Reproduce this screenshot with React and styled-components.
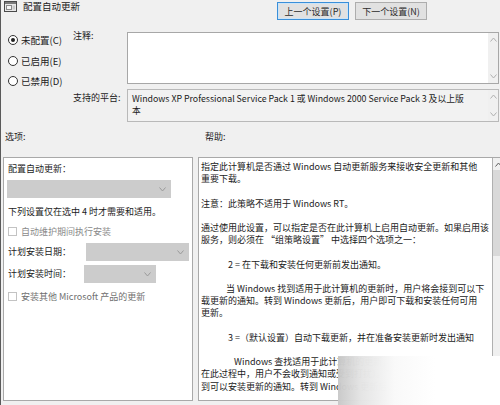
import styled, { createGlobalStyle, css } from 'styled-components'

const GlobalStyle = createGlobalStyle`
  html, body {
    margin: 0;
    padding: 0;
    background: #f0f0f0;
  }
  body {
    font-family: "Noto Sans CJK SC", "Noto Sans", sans-serif;
    font-size: 9px;
    color: #1b1b1b;
  }
`

const Window = styled.div`
  position: relative;
  width: 500px;
  height: 405px;
  box-sizing: border-box;
  border-left: 1px solid #5a5a5a;
  padding: 0 1px 0 2px;
  overflow: hidden;
`

const TopBar = styled.div`
  display: flex;
  align-items: flex-start;
  height: 22px;
`

const Title = styled.div`
  display: flex;
  align-items: center;
  gap: 6px;
  padding-left: 1px;
  font-size: 9.5px;
  line-height: 12px;
`

const NavButtons = styled.div`
  display: flex;
  gap: 6px;
  margin-left: 197px;
  margin-top: 2px;
`

const NavButton = styled.button`
  font: inherit;
  font-size: 9px;
  width: 72px;
  height: 18px;
  padding: 0;
  background: #e1e1e1;
  border: 1px solid ${p => (p.$focused ? '#3a8fd9' : '#adadad')};
  box-shadow: ${p => (p.$focused ? 'inset 0 0 0 1px #cce4f7' : 'none')};
  color: #2b2b2b;
`

const Settings = styled.div`
  display: grid;
  grid-template-columns: 70px 54px 1fr;
  grid-template-rows: 54px 33px;
  row-gap: 5px;
  margin-top: 8px;
`

const RadioGroup = styled.div`
  grid-row: 1 / span 2;
  display: flex;
  flex-direction: column;
`

const RadioRow = styled.label`
  display: flex;
  align-items: center;
  gap: 3px;
  height: 20.5px;
  padding-left: 5px;
  font-size: 9.5px;
`

const RadioDot = styled.span`
  width: 10px;
  height: 10px;
  box-sizing: border-box;
  border: 1px solid #333;
  border-radius: 50%;
  background: #fff;
  display: flex;
  align-items: center;
  justify-content: center;
  &::after {
    content: '';
    width: 4px;
    height: 4px;
    border-radius: 50%;
    background: ${p => (p.$checked ? '#222' : 'transparent')};
  }
`

const FieldLabel = styled.div`
  line-height: 12px;
  padding-top: ${p => p.$top || 0}px;
  font-size: 9px;
`

const TextBox = styled.div`
  display: flex;
  box-sizing: border-box;
  margin-top: ${p => p.$top || 0}px;
  border: 1px solid ${p => (p.$readOnly ? '#b9b9b9' : '#a7a7a7')};
  background: ${p => (p.$readOnly ? '#f2f2f2' : '#fff')};
`

const TextBody = styled.div`
  flex: 1;
  padding: 3px 4px;
  line-height: 12px;
  font-size: 8.8px;
  white-space: nowrap;
  overflow: hidden;
`

const ScrollBar = styled.div`
  width: 10px;
  flex: none;
  display: flex;
  flex-direction: column;
  justify-content: space-between;
  align-items: center;
  padding: 4px 0;
  background: #f0f0f0;
  ${p => p.$divider && css`border-left: 1px solid #b0b0b0;`}
`

const ScrollHead = styled.div`
  display: flex;
  flex-direction: column;
  align-items: center;
`

const ScrollThumb = styled.div`
  width: 10px;
  height: 86px;
  background: #d9d9d9;
  margin-top: 3px;
`

const PaneHeaders = styled.div`
  display: flex;
  margin-top: 9px;
  line-height: 12px;
  font-size: 9px;
`

const PaneHeader = styled.div`
  width: ${p => p.$width}px;
  padding-left: ${p => p.$indent || 0}px;
`

const Panes = styled.div`
  display: flex;
  gap: 5px;
  margin-top: 14px;
  height: 244px;
`

const OptionsPane = styled.div`
  width: 195px;
  box-sizing: border-box;
  border: 1px solid #a9a9a9;
  background: #fff;
  padding: 5px 3px 0 4px;
  display: flex;
  flex-direction: column;
`

const OptionText = styled.div`
  flex: none;
  white-space: nowrap;
  line-height: 12px;
  margin-top: ${p => p.$top || 0}px;
  color: #1b1b1b;
`

const Select = styled.div`
  flex: none;
  box-sizing: border-box;
  width: ${p => p.$width}px;
  height: 18px;
  margin-top: ${p => p.$top || 0}px;
  margin-left: ${p => p.$left || 0}px;
  background: #cccccc;
  display: flex;
  align-items: center;
  justify-content: flex-end;
  padding-right: 5px;
`

const CheckRow = styled.label`
  display: flex;
  align-items: center;
  gap: 4px;
  height: 12px;
  white-space: nowrap;
  margin-top: ${p => p.$top || 0}px;
  color: ${p => p.$color || '#8a8a8a'};
`

const CheckBox = styled.span`
  width: 9px;
  height: 9px;
  box-sizing: border-box;
  border: 1px solid #c3c3c3;
  background: #fff;
`

const FieldRow = styled.div`
  display: flex;
  align-items: center;
  gap: ${p => p.$gap}px;
  margin-top: ${p => p.$top || 0}px;
`

const HelpPane = styled.div`
  flex: 1;
  display: flex;
  box-sizing: border-box;
  border: 1px solid #a9a9a9;
  background: #fff;
`

const HelpText = styled.div`
  flex: 1;
  padding: 3px 2px 0 2px;
  line-height: 12.2px;
  font-size: 9px;
  white-space: nowrap;
  overflow: hidden;
`

const Para = styled.p`
  margin: 0 0 12.2px 0;
  text-indent: ${p => p.$indent || 0}px;
`

const Watermark = styled.div`
  position: absolute;
  right: 0;
  bottom: 0;
  width: 162px;
  height: 49px;
  background: linear-gradient(to right, rgba(200, 200, 200, 0.97) 0, rgba(228, 228, 228, 0.98) 14%, #f9f9f9 35%, #fff 60%);
`

function Chevron ({ up, color = '#9a9a9a' }) {
  return (
    <svg width='7' height='5' viewBox='0 0 7 5'>
      <polyline
        points={up ? '0.5,4.5 3.5,1 6.5,4.5' : '0.5,0.5 3.5,4 6.5,0.5'}
        fill='none'
        stroke={color}
        strokeWidth='1'
      />
    </svg>
  )
}

function WinIcon () {
  return (
    <svg width='13' height='11' viewBox='0 0 13 11'>
      <rect x='0.5' y='0.5' width='12' height='10' fill='#e8e8e8' stroke='#4a4a4a' />
      <rect x='1' y='1' width='11' height='2' fill='#7a7a7a' />
      <rect x='2.5' y='4.5' width='5' height='4' fill='#f6f6f6' stroke='#8a8a8a' />
      <rect x='8.5' y='4.5' width='2.5' height='4' fill='#c9c9c9' />
    </svg>
  )
}

export default function App () {
  return (
    <>
      <GlobalStyle />
      <Window>
        <TopBar>
          <Title><WinIcon />配置自动更新</Title>
          <NavButtons>
            <NavButton $focused>上一个设置(P)</NavButton>
            <NavButton>下一个设置(N)</NavButton>
          </NavButtons>
        </TopBar>

        <Settings>
          <RadioGroup>
            <RadioRow><RadioDot $checked />未配置(C)</RadioRow>
            <RadioRow><RadioDot />已启用(E)</RadioRow>
            <RadioRow><RadioDot />已禁用(D)</RadioRow>
          </RadioGroup>
          <FieldLabel>注释:</FieldLabel>
          <TextBox $top={2}>
            <TextBody />
            <ScrollBar>
              <Chevron up color='#b0b0b0' />
              <Chevron color='#b0b0b0' />
            </ScrollBar>
          </TextBox>
          <FieldLabel $top={3}>支持的平台:</FieldLabel>
          <TextBox $readOnly>
            <TextBody>
              Windows XP Professional Service Pack 1 或 Windows 2000 Service Pack 3 及以上版<br />本
            </TextBody>
            <ScrollBar>
              <Chevron up color='#b0b0b0' />
              <Chevron color='#b0b0b0' />
            </ScrollBar>
          </TextBox>
        </Settings>

        <PaneHeaders>
          <PaneHeader $width={200} $indent={2}>选项:</PaneHeader>
          <PaneHeader $width={200}>帮助:</PaneHeader>
        </PaneHeaders>

        <Panes>
          <OptionsPane>
            <OptionText>配置自动更新：</OptionText>
            <Select $width={164} $top={5} $left={-1}><Chevron /></Select>
            <OptionText $top={8}>下列设置仅在选中 4 时才需要和适用。</OptionText>
            <CheckRow $top={7}><CheckBox />自动维护期间执行安装</CheckRow>
            <FieldRow $top={6} $gap={15}>
              <OptionText>计划安装日期：</OptionText>
              <Select $width={103}><Chevron /></Select>
            </FieldRow>
            <FieldRow $top={4} $gap={13}>
              <OptionText>计划安装时间：</OptionText>
              <Select $width={72}><Chevron /></Select>
            </FieldRow>
            <CheckRow $top={7} $color='#6f6f6f'><CheckBox />安装其他 Microsoft 产品的更新</CheckRow>
          </OptionsPane>

          <HelpPane>
            <HelpText>
              <Para>指定此计算机是否通过 Windows 自动更新服务来接收安全更新和其他<br />重要下载。</Para>
              <Para>注意：此策略不适用于 Windows RT。</Para>
              <Para>通过使用此设置，可以指定是否在此计算机上启用自动更新。如果启用该<br />服务，则必须在 “组策略设置” 中选择四个选项之一：</Para>
              <Para $indent={27}>2 = 在下载和安装任何更新前发出通知。</Para>
              <Para $indent={25}>当 Windows 找到适用于此计算机的更新时，用户将会接到可以下<br />载更新的通知。转到 Windows 更新后，用户即可下载和安装任何可用<br />更新。</Para>
              <Para $indent={27}>3 =（默认设置）自动下载更新，并在准备安装更新时发出通知</Para>
              <Para $indent={33}>Windows 查找适用于此计算机的更新，并在后台下载这些更新（<br />在此过程中，用户不会收到通知或受到打扰）。下载完成后，用户将<br />到可以安装更新的通知。转到 Windows 更新后，用户即可安装这些</Para>
            </HelpText>
            <ScrollBar $divider>
              <ScrollHead>
                <Chevron up color='#606060' />
                <ScrollThumb />
              </ScrollHead>
            </ScrollBar>
          </HelpPane>
        </Panes>

        <Watermark />
      </Window>
    </>
  )
}
